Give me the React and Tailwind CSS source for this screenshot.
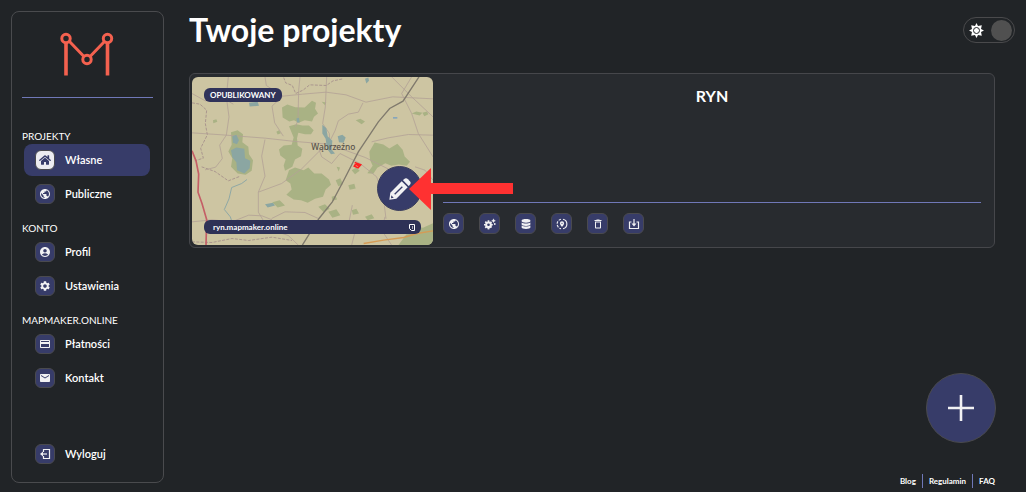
import { useState } from 'react';
import { FaDatabase, FaHome } from 'react-icons/fa';
import {
  MdAccountCircle,
  MdDeleteOutline,
  MdEmail,
  MdOutlineCreditCard,
  MdPublic,
  MdSettings,
} from 'react-icons/md';

const sections = [
  {
    title: 'PROJEKTY',
    items: [
      { name: 'Własne', icon: FaHome, active: true },
      { name: 'Publiczne', icon: MdPublic },
    ],
  },
  {
    title: 'KONTO',
    items: [
      { name: 'Profil', icon: MdAccountCircle },
      { name: 'Ustawienia', icon: MdSettings },
    ],
  },
  {
    title: 'MAPMAKER.ONLINE',
    items: [
      { name: 'Płatności', icon: MdOutlineCreditCard },
      { name: 'Kontakt', icon: MdEmail },
    ],
  },
];

const actions = [
  { name: 'Publikacja', icon: MdPublic },
  { name: 'Ustawienia mapy', icon: SparkGearIcon },
  { name: 'Dane', icon: DatabaseIcon },
  { name: 'Lokalizacja', icon: TargetPinIcon },
  { name: 'Usuń', icon: MdDeleteOutline },
  { name: 'Pobierz', icon: DownloadIcon },
];

function Logo() {
  return (
    <svg viewBox="0 0 54 44" className="h-[44px] w-[54px]" fill="none" stroke="#f4614f" strokeWidth="3">
      <path d="M6 11V43.500M47.500 11V43.500" strokeWidth="3.6" />
      <path d="M9.500 9.500L23.700 24.200M44.500 9.500L30.300 24.200" />
      <circle cx="6" cy="6.500" r="4.200" />
      <circle cx="47.500" cy="6.500" r="4.200" />
      <circle cx="27" cy="27.500" r="4.200" />
    </svg>
  );
}

function LogoutIcon({ className }) {
  return (
    <svg viewBox="0 0 24 24" className={className} fill="none" stroke="currentColor" strokeWidth="2.4">
      <path d="M9 8V3h12v18H9v-5" />
      <path d="M16 12H4" />
      <path d="M8 7v10l-6-5z" fill="currentColor" stroke="none" />
    </svg>
  );
}

function DatabaseIcon({ className }) {
  return (
    <span className={className}>
      <FaDatabase className="mx-auto mt-[1px] h-[10px] w-[10px]" />
    </span>
  );
}

function SparkGearIcon({ className }) {
  return (
    <svg viewBox="0 0 24 24" className={className} fill="none" stroke="currentColor">
      <circle cx="9" cy="13.500" r="4.700" strokeWidth="4" />
      <path d="M9 4.500v18M0 13.500h4M14 13.500h4M2.600 7.100l3 3M12.400 16.900l3 3M2.600 19.900l3-3M12.400 10.100l3-3" strokeWidth="3.400" strokeDasharray="3.500 11" />
      <path d="M9 19v3.500" strokeWidth="3.400" />
      <circle cx="19" cy="5.500" r="2.400" fill="currentColor" stroke="none" />
      <circle cx="21.500" cy="12" r="1.800" fill="currentColor" stroke="none" />
      <path d="M19 1.500v8M15 5.500h8" strokeWidth="1.400" />
    </svg>
  );
}

function TargetPinIcon({ className }) {
  return (
    <svg viewBox="0 0 24 24" className={className} fill="none" stroke="currentColor" strokeWidth="2.2">
      <path d="M14 2.500a9.700 9.700 0 0 1 0 19" />
      <path d="M10 2.500a9.700 9.700 0 0 0 0 19" strokeDasharray="5 2.500" />
      <path d="M12 6.500a4.200 4.200 0 0 0-4.200 4.200C7.800 14 12 17.800 12 17.800s4.200-3.800 4.200-7.100A4.200 4.200 0 0 0 12 6.500zm0 3a1.200 1.200 0 1 1 0 2.400 1.200 1.200 0 0 1 0-2.400z" fill="currentColor" fillRule="evenodd" stroke="none" />
    </svg>
  );
}

function DownloadIcon({ className }) {
  return (
    <svg viewBox="0 0 24 24" className={className} fill="none" stroke="currentColor" strokeWidth="2.4">
      <path d="M7 8H3v13h18V8h-4" />
      <path d="M12 2v10" />
      <path d="M7 11h10l-5 6z" fill="currentColor" stroke="none" />
    </svg>
  );
}

function SunIcon() {
  return (
    <svg viewBox="0 0 30 30" className="h-[15px] w-[15px]">
      <path
        d="M15 0l3 6 7.600-1.600L24 12l6 3-6 3 1.600 7.600L18 24l-3 6-3-6-7.600 1.600L6 18l-6-3 6-3-1.600-7.600L12 6z"
        fill="#fff"
      />
      <circle cx="15" cy="15" r="6" fill="#fff" stroke="#212427" strokeWidth="2" />
    </svg>
  );
}

function PencilIcon() {
  return (
    <svg viewBox="0 0 66 66" className="h-[22px] w-[22px]" fill="#f1f1f3">
      <path d="M1 65l3-21L38 10l18 18-34 34z" />
      <path d="M42 7l3-3c4-4 8-4 12 0l5 5c4 4 4 8 0 12l-3 3z" />
      <path d="M17 49l23-23" stroke="#373c69" strokeWidth="4" fill="none" />
      <path d="M7 52l7 7-8 2z" fill="#373c69" />
    </svg>
  );
}

function MapPreview() {
  return (
    <svg viewBox="21 20 723 505" preserveAspectRatio="xMidYMid slice" className="h-full w-full">
      <rect x="0" y="0" width="765" height="540" fill="#cdc5a2" />
      <g fill="#a9b284">
        <path d="M291 112l16-9 24 8 28 1 22-20 12 6-3 18 9 14-12 10-6 14-22-4-18 8-14-8-14 4-20-12z" />
        <path d="M312 168l22-6 18 4 20 0 14 14-8 12-18 0-20-4-4 16 2 22 14 10-4 22-18 10-8 22-22 12-4-16 6-18-16-12-4-18 14-12 24-2 6-22z" />
        <path d="M312 300l18-8 26 8 14-8 18 18 22 0 22 18 6 16-16 14-8 22-24 6-22 12-20-8-22-2-22-14 16-16-4-18-14-10z" />
        <path d="M553 245l16-28 26 6 18 12 24-14 16 18 6 20 16 16-10 12-24-4-22 4-18-8-24 14-12 18-18-2 16-22-8-18z" />
        <path d="M138 186l20-6 16 12-2 24 18 14 2 22 12 18-4 32-18 12-24-4-20-20 4-26-12-20 10-20z" />
        <path d="M640 525l24-32 22-4 6-20 22 4 30-14v66z" />
        <path d="M512 150l14-4 14 8-10 8zM680 130l14-6 18 4-8 8zM712 128l14-4 4 8-12 6zM400 410l20-8 14 14-18 10zM430 425l24-8 12 18-24 8zM262 396l22-6 16 16-22 6zM452 330l14-6 8 18-14 6zM490 345l18-4 4 14-18 4zM500 300l14-8 10 10-14 10zM274 185l8-5 6 9-10 4zM84 150l10-3 3 8-12 4zM500 420l14-4 8 14-18 4zM540 440l20-8 8 12-20 6zM455 290l10 2-4 12zM410 95l14 2-4 8zM440 380l12-4 4 12-14 4z" />
      </g>
      <g fill="none" stroke="#b3a296" strokeWidth="2.5">
        <path d="M21 188l90 6 130 10 90 10 100 8 110 40 40 20 60 30" />
        <path d="M560 215l50-12 60-10 74 2" />
        <path d="M130 20l-6 60 8 60-8 55-20 30 8 40-20 26-32 8" />
        <path d="M345 20l-4 40-2 90-8 20M425 20l-4 90-8 50 20 30 2 40" />
        <path d="M293 78l60-6 70-6 60 8 60 22 80-16 121 6" />
        <path d="M21 70l40 22 60-4 24 14M293 78l-32 30 8 50 26 40" />
        <path d="M240 208l-10 50 10 60-20 48 0 60 30 50 60 20 30 29" />
        <path d="M220 366l70-26 60-44 52-52 28-22 20-40 10-30 30-20 30-6 14-28" />
        <path d="M465 250l-25 30-30-20-8-22M465 250l60 30 50 40 20 60 8 66" />
        <path d="M680 20l-30 50 30 60 20 60 44 70M690 290l30 10 24 30M620 20l60 60 64 60" />
        <path d="M21 455l60-6 60 6 50-20 40 2 30 12M240 20l4 26 50 32" />
        <path d="M500 525l10-40-18-30 10-50M600 440l-10 40 30 45M260 445l40-20 60 2 40 18" />
      </g>
      <g fill="none" stroke="#aa968e" strokeWidth="3" strokeDasharray="9 4">
        <path d="M296 22l6 16 20 8 10 24 22-10 20-16 50 2 20-14 30-6" />
        <path d="M21 98l24 4 20 18-4 40 6 34-20 40 8 30-26 8" />
        <path d="M50 290l40 14 40 28 36-14M21 515l60 2 60-12 50 6 70-10 60 10" />
      </g>
      <path d="M186 328l-16 12-30 12-8 34-14 32 18 22 8 24" fill="none" stroke="#8fa8a5" strokeWidth="3" />
      <g fill="#8ba6a2">
        <path d="M142 198l12-4 8 16-6 12-12-4zM138 240l16-8 24 4 2 28 16 8-2 22-16 16-22-10-2-24-12-14z" />
        <path d="M412 164l12 10 4 24 14 14-2 26 10 12-12 2-12-16-4-30-10-16zM458 198l14-4 10 8-6 16-14-2zM192 98l26-3 4 12-28 2zM540 26l10-4 2 10-8 8zM334 145l8-2 2 14-8 0zM240 402l24-4 6 8-22 6z" />
      </g>
      <path d="M624 143h13" stroke="#6f9bc4" strokeWidth="4" />
      <path d="M536 520l60-10 60-8 40-12 48-8" fill="none" stroke="#d59b55" strokeWidth="4" />
      <path d="M21 242l12 30 8 40-2 54 12 34 14 48-2 77" fill="none" stroke="#c45e66" strokeWidth="5" />
      <path d="M352 525l50-80 40-50 34-64 44-86 60-90 34-40 40-22 48-73" fill="none" stroke="#807a6d" strokeWidth="4" />
      <path d="M509 277l18 7-8 9-11-5 4-6 10 5" fill="none" stroke="#ff1f1f" strokeWidth="5" />
      <text x="445" y="240" textAnchor="middle" fontSize="25" fontWeight="500" fontFamily="Noto Sans, sans-serif" fill="#57514a">
        Wąbrzeźno
      </text>
    </svg>
  );
}

function NavItem({ name, icon: Icon, active }) {
  return (
    <a
      href="#"
      className={
        active
          ? 'flex h-8 items-center gap-[10px] rounded-lg bg-[#373c69] pl-[11px] text-[11px] font-semibold text-white'
          : 'flex h-8 items-center gap-[10px] rounded-lg pl-[11px] text-[11px] font-semibold text-white'
      }
    >
      <span
        className={
          active
            ? 'flex h-5 w-5 items-center justify-center rounded-md border border-[#4a4a4e] bg-[#ececf0] text-[#373c69]'
            : 'flex h-5 w-5 items-center justify-center rounded-md border border-[#4a4a4e] bg-[#373c69] text-[#f1f1f3]'
        }
      >
        <Icon className="h-3 w-3" />
      </span>
      {name}
    </a>
  );
}

function Sidebar() {
  return (
    <aside className="flex w-[153px] shrink-0 flex-col rounded-lg border border-[#4a4b4e] px-[10px] pt-5 pb-3">
      <div className="flex justify-center border-b border-[#7078b8] pr-[2px] pb-[21px]">
        <Logo />
      </div>
      <nav className="mt-[30px] flex flex-col gap-[10px]">
        {sections.map(section => (
          <div key={section.title}>
            <h2 className="text-[10px] leading-4 text-white">{section.title}</h2>
            <div className="mr-[3px] ml-[2px] flex flex-col gap-[2px]">
              {section.items.map(item => <NavItem key={item.name} {...item} />)}
            </div>
          </div>
        ))}
      </nav>
      <div className="mt-auto ml-[2px]">
        <NavItem name="Wyloguj" icon={LogoutIcon} />
      </div>
    </aside>
  );
}

function ProjectCard() {
  return (
    <article className="relative mr-5 flex rounded-md border border-[#46474b] bg-[#282b2f] px-[2px] pt-[3px] pb-[2px]">
      <div className="relative h-[168px] w-[241px] shrink-0 overflow-hidden rounded-md">
        <MapPreview />
        <span className="absolute top-[11px] left-3 rounded-md bg-[#30335a] px-[6px] text-[8px] leading-[14px] font-bold text-white">
          OPUBLIKOWANY
        </span>
        <button type="button" aria-label="Edytuj" className="absolute right-[11px] bottom-[34px] flex h-[45px] w-[45px] items-center justify-center rounded-full border border-[#3b3e5c] bg-[#373c69]">
          <PencilIcon />
        </button>
        <div className="absolute right-3 bottom-[11px] left-3 flex h-[14px] items-center justify-between rounded-md bg-[#2e3156] pr-[5px] pl-[9px] text-[8px] font-bold text-white">
          <a href="#">ryn.mapmaker.online</a>
          <button type="button" aria-label="Kopiuj adres">
            <svg viewBox="0 0 8 8" className="h-2 w-2" fill="none" stroke="currentColor">
              <path d="M1.500 1.500h5v6h-3l-2-2z" />
              <path d="M4.500 3v3" strokeWidth="0.600" />
            </svg>
          </button>
        </div>
      </div>
      <div className="flex flex-1 flex-col pr-[11px] pb-[11px] pl-[10px]">
        <h2 className="mt-[9px] text-center text-base leading-5 font-bold text-white">RYN</h2>
        <div className="mt-auto flex gap-[15px] border-t border-[#7078b8] pt-[10px]">
          {actions.map(({ name, icon: Icon }) => (
            <button key={name} type="button" aria-label={name} className="flex h-[21px] w-[21px] items-center justify-center rounded-md border border-[#4a4a4e] bg-[#373c69] text-[#f1f1f3]">
              <Icon className="h-3 w-3" />
            </button>
          ))}
        </div>
      </div>
      <svg viewBox="0 0 104 42" className="absolute top-[94px] left-[219px] h-[42px] w-[104px]">
        <path d="M0 21L22 0v15h82v11H22v16z" fill="#ff3131" />
      </svg>
    </article>
  );
}

export default function App() {
  const [light, setLight] = useState(false);

  return (
    <div className="flex min-h-screen gap-[25px] bg-[#212427] pt-[11px] pr-[11px] pb-[9px] pl-[11px] font-['Lato',sans-serif]">
      <Sidebar />
      <main className="flex flex-1 flex-col">
        <header className="mb-[24px] flex items-center justify-between">
          <h1 className="text-[32px] leading-[38px] font-bold text-white">Twoje projekty</h1>
          <label className="flex h-[26px] w-[52px] cursor-pointer items-center justify-between rounded-full border border-[#4a4a4c] pr-[2px] pl-[5px]">
            <input type="checkbox" aria-label="Jasny motyw" checked={light} onChange={e => setLight(e.target.checked)} className="sr-only" />
            <SunIcon />
            <span className="h-[21px] w-[21px] rounded-full bg-[#505050]" />
          </label>
        </header>
        <ProjectCard />
        <button type="button" aria-label="Dodaj projekt" className="mt-auto mr-[19px] mb-[31px] flex h-[70px] w-[70px] items-center justify-center self-end rounded-full border border-[#4a4a4e] bg-[#373c69]">
          <svg viewBox="0 0 26 26" className="h-[26px] w-[26px]" stroke="#f1f1f3" strokeWidth="2.6">
            <path d="M13 0v26M0 13h26" />
          </svg>
        </button>
        <footer className="mr-5 -mb-[5px] flex justify-end text-[8px] leading-[14px] font-bold text-white">
          <a href="#" className="pr-[6px]">Blog</a>
          <a href="#" className="border-l border-[#7078b8] px-[6px]">Regulamin</a>
          <a href="#" className="border-l border-[#7078b8] pl-[6px]">FAQ</a>
        </footer>
      </main>
    </div>
  );
}
